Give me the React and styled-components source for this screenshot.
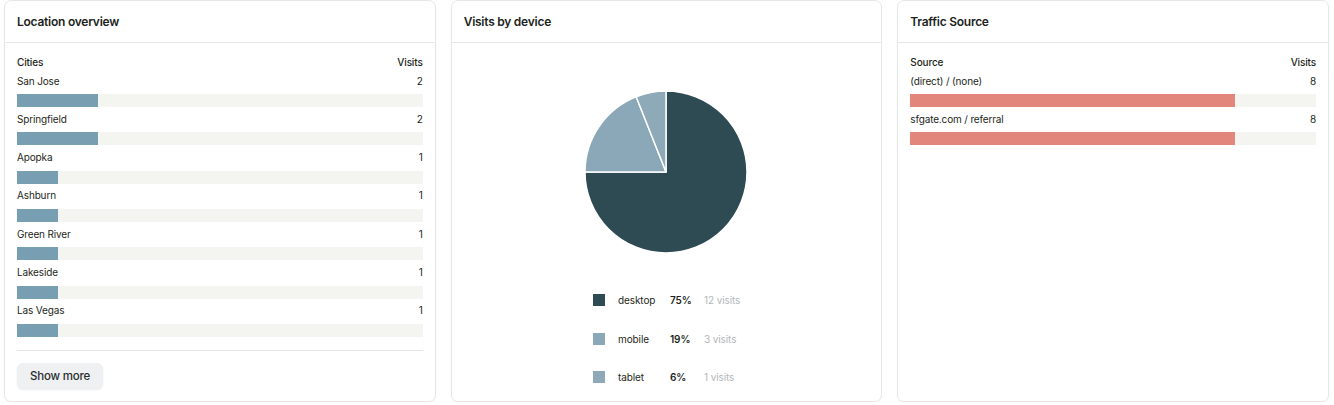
import React from 'react';
import styled, { createGlobalStyle } from 'styled-components';

const Global = createGlobalStyle`
  html, body {
    margin: 0;
    padding: 0;
    background: #ffffff;
  }
  body {
    font-family: Inter, "Noto Sans", "Liberation Sans", sans-serif;
    color: #1d1f20;
    -webkit-font-smoothing: antialiased;
  }
`;

const Page = styled.div`
  display: grid;
  grid-template-columns: repeat(3, 1fr);
  column-gap: 15px;
  padding: 0 5px 0 4px;
  height: 402px;
`;

const Card = styled.section`
  display: flex;
  flex-direction: column;
  border: 1px solid #e6e7e8;
  border-radius: 7px;
  background: #fff;
  box-shadow: 0 1px 2px rgba(0, 0, 0, 0.04);
  overflow: hidden;
`;

const CardHeader = styled.header`
  height: 41px;
  flex: none;
  display: flex;
  align-items: center;
  padding: 0 12px;
  border-bottom: 1px solid #e6e7e8;
  font-size: 12px;
  font-weight: 600;
  letter-spacing: -0.25px;
`;

const ListBody = styled.div`
  padding: 10.5px 12px 13px;
  display: flex;
  flex-direction: column;
`;

const HeadRow = styled.div`
  display: flex;
  justify-content: space-between;
  height: 17px;
  line-height: 17px;
  font-size: 10px;
  font-weight: 500;
  letter-spacing: -0.15px;
  margin-bottom: 2px;
`;

const Item = styled.div`
  display: flex;
  flex-direction: column;
  margin-bottom: 3.83px;
`;

const ItemLine = styled.div`
  display: flex;
  justify-content: space-between;
  height: 17px;
  line-height: 17px;
  font-size: 10px;
  letter-spacing: -0.15px;
`;

const Track = styled.div`
  margin-top: 4.5px;
  height: 13px;
  background: #f4f4f0;
`;

const Fill = styled.div`
  height: 100%;
  background: ${p => p.$color};
`;

const Divider = styled.hr`
  border: 0;
  border-top: 1px solid #e4e5e6;
  margin: 9px 0 12px;
`;

const ShowMore = styled.button`
  align-self: flex-start;
  height: 26px;
  padding: 0 13px;
  border: 0;
  border-radius: 6px;
  background: #eef0f1;
  box-shadow: 0 1px 2px rgba(0, 0, 0, 0.08);
  font-family: inherit;
  font-size: 11.5px;
  font-weight: 500;
  letter-spacing: -0.2px;
  color: #2a2c2e;
`;

const ChartBody = styled.div`
  display: flex;
  flex-direction: column;
  align-items: center;
  padding-top: 47px;
`;

const Legend = styled.div`
  margin-top: 40px;
  margin-left: 10px;
  display: grid;
  grid-template-columns: 25px 52px 34px 46px;
  row-gap: 26.5px;
  align-items: center;
  font-size: 10px;
  letter-spacing: -0.1px;
  line-height: 12px;
`;

const Swatch = styled.span`
  width: 12px;
  height: 12px;
  background: ${p => p.$color};
`;

const Pct = styled.span`
  font-weight: 600;
`;

const Muted = styled.span`
  color: #b3b7ba;
`;

const cities = [
  ['San Jose', 2],
  ['Springfield', 2],
  ['Apopka', 1],
  ['Ashburn', 1],
  ['Green River', 1],
  ['Lakeside', 1],
  ['Las Vegas', 1],
];

const sources = [
  ['(direct) / (none)', 8],
  ['sfgate.com / referral', 8],
];

const devices = [
  { name: 'desktop', pct: 75, visits: 12, color: '#2e4b53' },
  { name: 'mobile', pct: 19, visits: 3, color: '#8ba8b8' },
  { name: 'tablet', pct: 6, visits: 1, color: '#8ea9b7' },
];

function BarList({ head, label, rows, color }) {
  return (
    <>
      <HeadRow>
        <span>{head}</span>
        <span>{label}</span>
      </HeadRow>
      {rows.map(([name, v]) => (
        <Item key={name}>
          <ItemLine>
            <span>{name}</span>
            <span>{v}</span>
          </ItemLine>
          <Track>
            <Fill $color={color} style={{ width: `${v * 10}%` }} />
          </Track>
        </Item>
      ))}
    </>
  );
}

function Pie() {
  const r = 81;
  const c = 82;
  let start = 0;
  const pt = a => {
    const rad = (a * Math.PI) / 180;
    return [c + r * Math.sin(rad), c - r * Math.cos(rad)];
  };
  return (
    <svg width="164" height="164" viewBox="0 0 164 164">
      {devices.map(d => {
        const sweep = (d.pct / 100) * 360;
        const [x1, y1] = pt(start);
        const [x2, y2] = pt(start + sweep);
        const large = sweep > 180 ? 1 : 0;
        start += sweep;
        return (
          <path
            key={d.name}
            d={`M${c} ${c} L${x1} ${y1} A${r} ${r} 0 ${large} 1 ${x2} ${y2} Z`}
            fill={d.color}
            stroke="#fff"
            strokeWidth="1.5"
            strokeLinejoin="round"
          />
        );
      })}
    </svg>
  );
}

export default function App() {
  return (
    <Page>
      <Global />
      <Card>
        <CardHeader>Location overview</CardHeader>
        <ListBody>
          <BarList head="Cities" label="Visits" rows={cities} color="#789fb1" />
          <Divider />
          <ShowMore>Show more</ShowMore>
        </ListBody>
      </Card>
      <Card>
        <CardHeader>Visits by device</CardHeader>
        <ChartBody>
          <Pie />
          <Legend>
            {devices.map(d => (
              <React.Fragment key={d.name}>
                <Swatch $color={d.color} />
                <span>{d.name}</span>
                <Pct>{d.pct}%</Pct>
                <Muted>{d.visits} visits</Muted>
              </React.Fragment>
            ))}
          </Legend>
        </ChartBody>
      </Card>
      <Card>
        <CardHeader>Traffic Source</CardHeader>
        <ListBody>
          <BarList head="Source" label="Visits" rows={sources} color="#e2857a" />
        </ListBody>
      </Card>
    </Page>
  );
}
